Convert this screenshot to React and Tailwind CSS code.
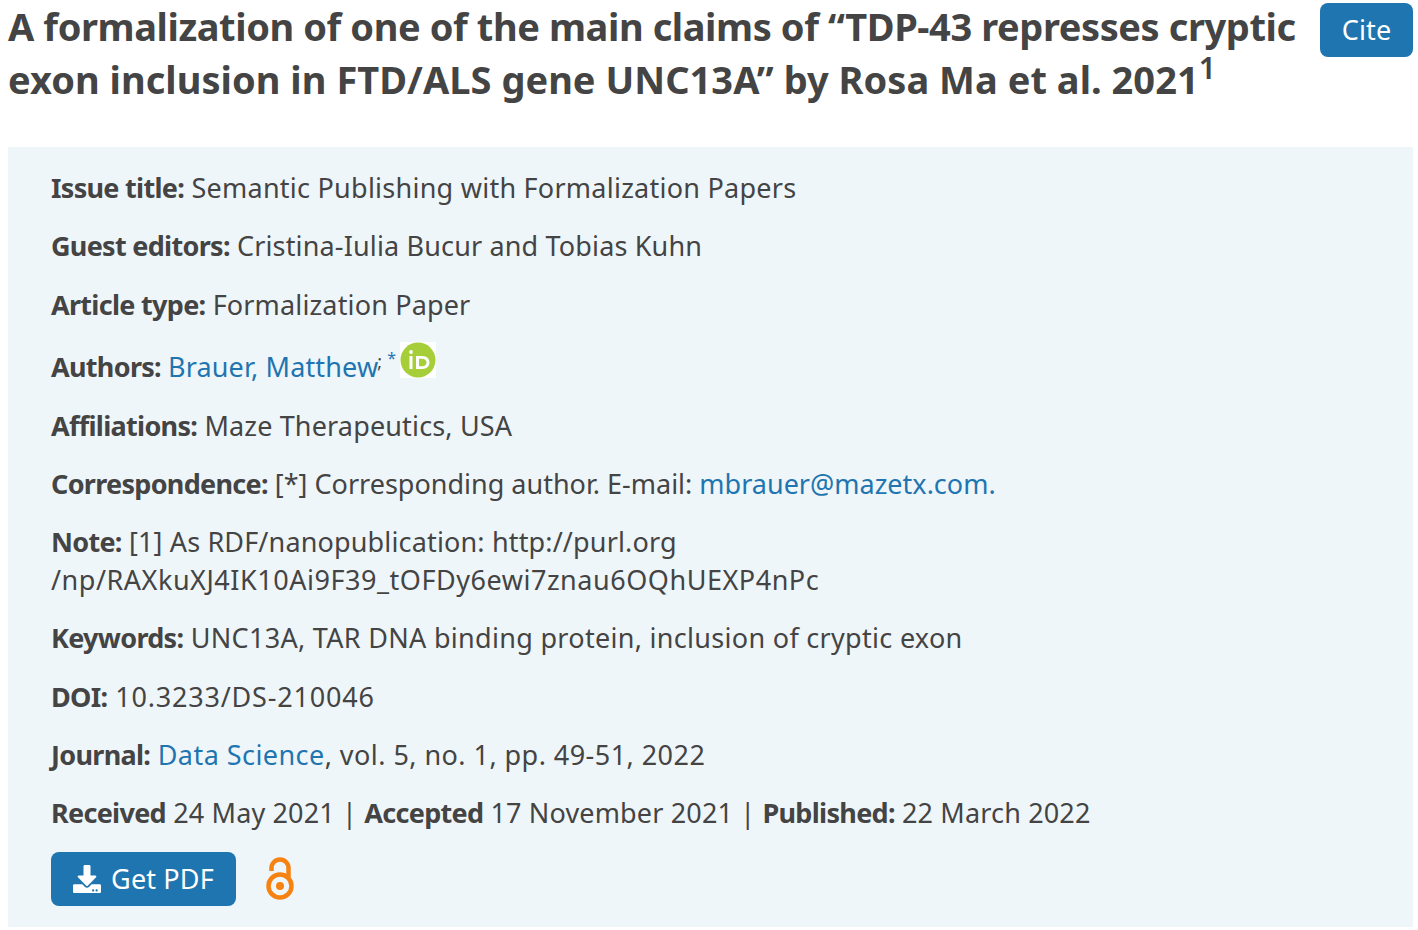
import { FaDownload } from "react-icons/fa";

const font = { fontFamily: '"Noto Sans", sans-serif' };

function Orcid() {
  return (
    <svg viewBox="0 0 36 36" className="w-[36px] h-[36px] bg-white ml-[4px] -mt-[14px]">
      <circle cx="18" cy="18" r="17.5" fill="#a6ce39" />
      <rect x="9.5" y="14" width="3" height="13" fill="#fff" />
      <circle cx="11" cy="10" r="1.9" fill="#fff" />
      <path d="M16 14h6.2c4.6 0 7.3 2.9 7.3 6.5S26.8 27 22.2 27H16V14zm3 2.7v7.6h3c3 0 4.5-1.8 4.5-3.8s-1.500-3.800-4.500-3.800h-3z" fill="#fff" />
    </svg>
  );
}

function OpenAccess() {
  return (
    <svg viewBox="0 0 28 44" className="w-[28px] h-[44px]" fill="none">
      <circle cx="14" cy="29" r="11.500" stroke="#f68212" strokeWidth="4.500" />
      <circle cx="14" cy="29" r="4" fill="#f68212" />
      <path d="M5.500 14V11a8.500 8.500 0 0 1 17 0v9" stroke="#f68212" strokeWidth="4.500" />
    </svg>
  );
}

function Row({ className = "", children }) {
  return <p className={`mb-[21px] leading-[37.4px] ${className}`}>{children}</p>;
}

function Label({ children }) {
  return <b className="font-bold tracking-[-0.7px]">{children}</b>;
}

const linkCls = "text-[#1f75b0]";

export default function App() {
  return (
    <div style={font} className="w-[1418px] h-[930px] overflow-hidden bg-white text-[#444] pl-[8px] pr-[5px]">
      <div className="flex items-start justify-between">
        <h1 className="w-[1300px] text-[38px] leading-[53px] font-bold">
          <span className="block tracking-[-0.41px]">A formalization of one of the main claims of “TDP-43 represses cryptic</span>
          <span className="block tracking-[0.03px]">
            exon inclusion in FTD/ALS gene UNC13A” by Rosa Ma et al. 2021
            <sup className="text-[30px] leading-none font-semibold">1</sup>
          </span>
        </h1>
        <button className="mt-[3px] w-[93px] h-[54px] rounded-[8px] bg-[#1f75b0] text-white text-[27px] tracking-[0.15px]">Cite</button>
      </div>

      <div className="mt-[41px] h-[780px] bg-[#eff6fa] pl-[43px] pt-[22px] text-[27px] tracking-[0.15px]">
        <Row className="tracking-[0.25px]"><Label>Issue title:</Label> Semantic Publishing with Formalization Papers</Row>
        <Row><Label>Guest editors:</Label> Cristina-Iulia Bucur and Tobias Kuhn</Row>
        <Row><Label>Article type:</Label> Formalization Paper</Row>
        <div className="mb-[21px] h-[37.400px] flex items-center mt-[25px]">
          <Label>Authors:</Label>
          <a className={`${linkCls} ml-[7px]`}>Brauer, Matthew</a>
          <span className="text-[18px] -mt-[10px] -ml-[1px]">;</span>
          <span className={`${linkCls} text-[16px] -mt-[18px] ml-[5px]`}>*</span>
          <Orcid />
        </div>
        <Row><Label>Affiliations:</Label> Maze Therapeutics, USA</Row>
        <Row className="tracking-[0px]"><Label>Correspondence:</Label> [*] Corresponding author. E-mail: <a className={linkCls}>mbrauer@mazetx.com</a><span className={linkCls}>.</span></Row>
        <Row><Label>Note:</Label> [1] As RDF/nanopublication: http://purl.org<br /><span className="tracking-[0.53px]">/np/RAXkuXJ4IK10Ai9F39_tOFDy6ewi7znau6OQhUEXP4nPc</span></Row>
        <Row className="tracking-[0.3px]"><Label>Keywords:</Label> UNC13A, TAR DNA binding protein, inclusion of cryptic exon</Row>
        <Row className="tracking-[0.8px]"><Label>DOI:</Label> 10.3233/DS-210046</Row>
        <Row className="tracking-[0.45px]"><Label>Journal:</Label> <a className={linkCls}>Data Science</a>, vol. 5, no. 1, pp. 49-51, 2022</Row>
        <Row><Label>Received</Label> 24 May 2021 | <Label>Accepted</Label> 17 November 2021 | <Label>Published:</Label> 22 March 2022</Row>
        <div className="flex items-center gap-[30px] -mt-[1px]">
          <button className="flex items-center justify-center gap-[10px] w-[185px] h-[54px] rounded-[8px] bg-[#1f75b0] text-white">
            <FaDownload className="w-[28px] h-[28px]" />
            <span>Get PDF</span>
          </button>
          <OpenAccess />
        </div>
      </div>
    </div>
  );
}
